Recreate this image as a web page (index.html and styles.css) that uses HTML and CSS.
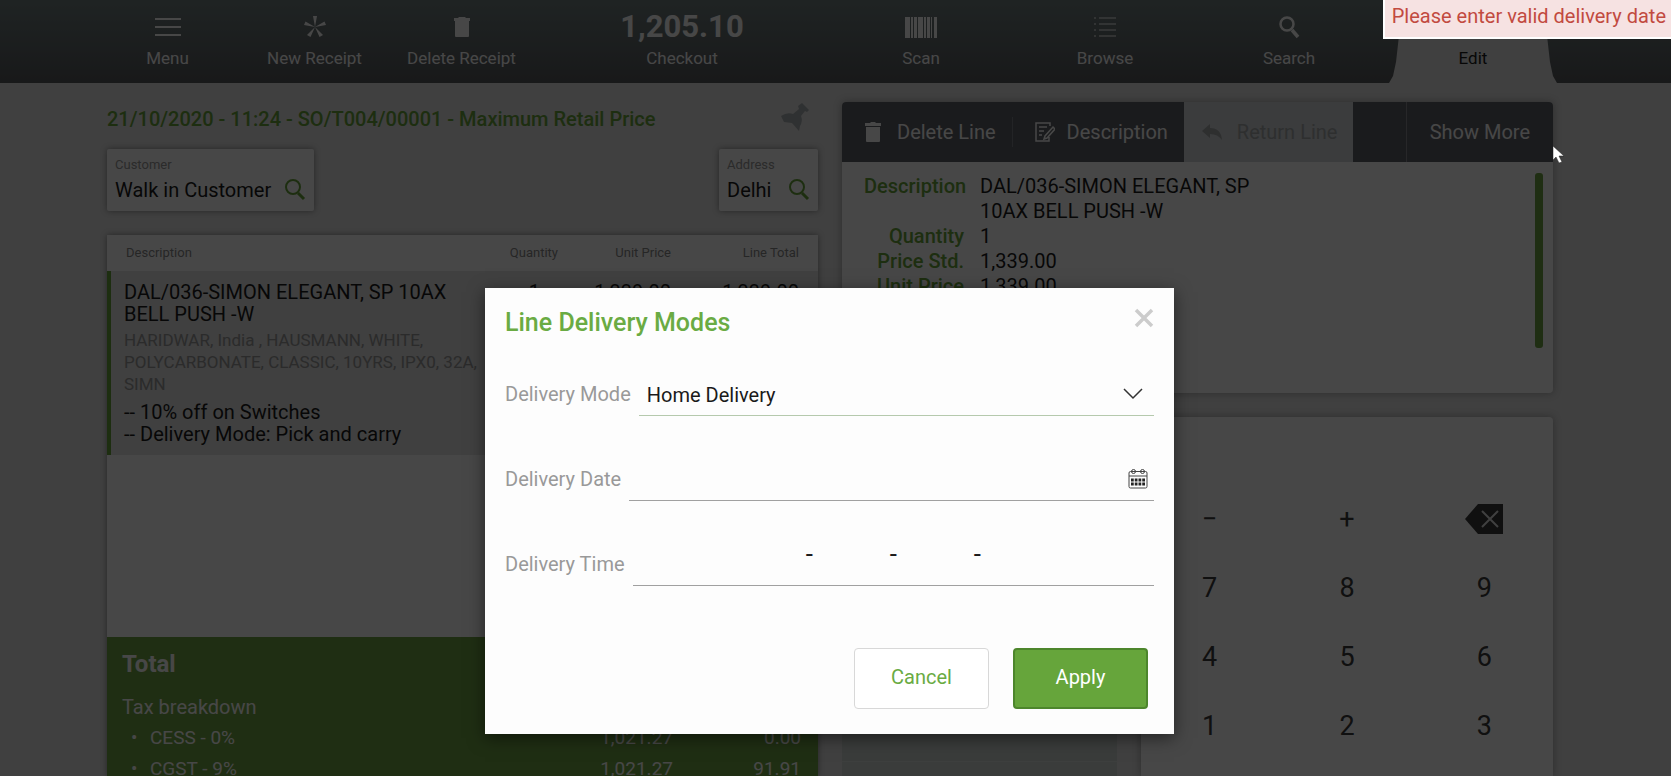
FILE: index.html
```
<!DOCTYPE html>
<html lang="en">
<head>
    <meta charset="UTF-8">
    <meta name="viewport" content="width=device-width, initial-scale=1.0">
    <title>Web POS</title>
    <link rel="stylesheet" href="styles.css">
</head>
<body>
    <div class="terminal">
        <nav class="toolbar">
            <button class="tool">
                <svg class="tool-icon" width="28" height="24" viewBox="0 0 28 24"><path d="M1 4h26M1 12h26M1 20h26" stroke="currentColor" stroke-width="2"/></svg>
                <span>Menu</span>
            </button>
            <button class="tool">
                <svg class="tool-icon" width="24" height="24" viewBox="0 0 24 24"><path d="M12 12L10 1h4zM12 12L1 10l1.500-3.500zM12 12l11-2-1.500-3.500zM12 12L4 20l3.500 2zM12 12l8 8-3.500 2z" fill="currentColor"/></svg>
                <span>New Receipt</span>
            </button>
            <button class="tool">
                <svg class="tool-icon" width="18" height="24" viewBox="0 0 18 24"><path d="M1 3h4l1-1h6l1 1h4v3H1zM2 6h14v15q0 1-1 1H3q-1 0-1-1z" fill="currentColor"/></svg>
                <span>Delete Receipt</span>
            </button>
            <button class="tool">
                <strong class="amount">1,205.10</strong>
                <span>Checkout</span>
            </button>
            <button class="tool">
                <svg class="tool-icon" width="32" height="24" viewBox="0 0 32 24"><path d="M0 2h5v21H0zM6 2h2v21H6zM9 2h3v21H9zM13 2h5v21h-5zM19 2h2v21h-2zM22 2h3v21h-3zM26 2h1v21h-1zM29 2h3v21h-3z" fill="currentColor"/></svg>
                <span>Scan</span>
            </button>
            <button class="tool">
                <svg class="tool-icon" width="24" height="24" viewBox="0 0 24 24"><path d="M1 3h2M1 9h2M1 15h2M1 21h2M6 3h17M6 9h17M6 15h17M6 21h17" stroke="currentColor" stroke-width="1"/></svg>
                <span>Browse</span>
            </button>
            <button class="tool">
                <svg class="tool-icon" width="24" height="24" viewBox="0 0 24 24"><g fill="none" stroke="currentColor"><circle cx="10" cy="9" r="6.500" stroke-width="2.500"/><path d="M15 15l6 7" stroke-width="3.500"/></g></svg>
                <span>Search</span>
            </button>
            <button class="tool tool-active">
                <svg class="tool-icon" width="24" height="24" viewBox="0 0 24 24"><path d="M4 20l1-5L17 3l4 4L9 19z" fill="currentColor"/></svg>
                <span>Edit</span>
            </button>
        </nav>

        <main class="workspace">
            <section class="receipt">
                <div class="receipt-head">
                    <h1>21/10/2020 - 11:24 - SO/T004/00001 - Maximum Retail Price</h1>
                    <svg class="pin" width="30" height="30" viewBox="0 0 30 30"><path d="M22 1l7 7-2 2-2-1-4 5q2 5-1 10l-1 5-7-8-8-1-3-6q6-4 12-2l6-5-1-3z"/></svg>
                </div>
                <div class="selectors">
                    <div class="selector">
                        <label for="customer">Customer</label>
                        <div class="selector-row">
                            <input id="customer" type="text" value="Walk in Customer">
                            <svg width="22" height="22" viewBox="0 0 22 22"><circle cx="9" cy="8" r="7"/><path d="M14 14l6 6" stroke-width="3"/></svg>
                        </div>
                    </div>
                    <div class="selector selector-small">
                        <label for="address">Address</label>
                        <div class="selector-row">
                            <input id="address" type="text" value="Delhi">
                            <svg width="22" height="22" viewBox="0 0 22 22"><circle cx="9" cy="8" r="7"/><path d="M14 14l6 6" stroke-width="3"/></svg>
                        </div>
                    </div>
                </div>
                <div class="ticket">
                    <table class="lines">
                        <thead>
                            <tr>
                                <th class="col-desc">Description</th>
                                <th class="col-qty">Quantity</th>
                                <th class="col-price">Unit Price</th>
                                <th class="col-total">Line Total</th>
                            </tr>
                        </thead>
                        <tbody>
                            <tr>
                                <td class="col-desc">
                                    <div>DAL/036-SIMON ELEGANT, SP 10AX BELL PUSH -W</div>
                                    <div class="attributes">HARIDWAR, India , HAUSMANN, WHITE, POLYCARBONATE, CLASSIC, 10YRS, IPX0, 32A, SIMN</div>
                                    <div>-- 10% off on Switches</div>
                                    <div>-- Delivery Mode: Pick and carry</div>
                                </td>
                                <td class="col-qty qty-value">1</td>
                                <td class="col-price">1,339.00</td>
                                <td class="col-total">1,339.00</td>
                            </tr>
                        </tbody>
                    </table>
                    <div class="totals">
                        <h2>Total</h2>
                        <p>Tax breakdown</p>
                        <ul>
                            <li><span>CESS - 0%</span><span>1,021.27</span><span>0.00</span></li>
                            <li><span>CGST - 9%</span><span>1,021.27</span><span>91.91</span></li>
                        </ul>
                    </div>
                </div>
            </section>

            <section class="side">
                <div class="card detail">
                    <div class="actions">
                        <button class="action">
                            <svg width="16" height="20" viewBox="0 0 16 20"><path d="M0 1h5l1-1h4l1 1h5v3H0zM1 5h14v14q0 1-1 1H2q-1 0-1-1z" fill="currentColor"/></svg>
                            Delete Line
                        </button>
                        <button class="action action-desc">
                            <svg width="20" height="20" viewBox="0 0 20 20"><path d="M15 4V1H1v18h13v-4M4 5h8M4 9h5M4 13h3M18 5l2 2-8 9-3 1 1-3z" fill="none" stroke="currentColor" stroke-width="1.500"/></svg>
                            Description
                        </button>
                        <button class="action action-off" disabled>
                            <svg width="21" height="18" viewBox="0 0 21 18"><path d="M8 1v4q11 0 12 12-4-6-12-6v4L0 8z" fill="currentColor"/></svg>
                            Return Line
                        </button>
                        <button class="action action-more">Show More</button>
                    </div>
                    <div class="detail-body">
                        <dl>
                            <dt>Description</dt><dd>DAL/036-SIMON ELEGANT, SP 10AX BELL PUSH -W</dd>
                            <dt>Quantity</dt><dd>1</dd>
                            <dt>Price Std.</dt><dd>1,339.00</dd>
                            <dt>Unit Price</dt><dd>1,339.00</dd>
                        </dl>
                        <div class="scrollbar"></div>
                    </div>
                </div>
                <div class="pad-row">
                    <div class="quick-keys"></div>
                    <div class="card keypad">
                        <div class="display"></div>
                        <button>−</button><button>+</button>
                        <button aria-label="Backspace"><svg width="38" height="30" viewBox="0 0 38 30"><path d="M0 15L13 0h25v30H13z" fill="#3a3a3a"/><path d="M17 7l16 16M33 7L17 23" stroke="#e4e4e4" stroke-width="2"/></svg></button>
                        <button>7</button><button>8</button><button>9</button>
                        <button>4</button><button>5</button><button>6</button>
                        <button>1</button><button>2</button><button>3</button>
                    </div>
                </div>
            </section>
        </main>
    </div>

    <div class="overlay">
        <form class="dialog" role="dialog" aria-labelledby="dialog-title">
            <header class="dialog-head">
                <h2 id="dialog-title">Line Delivery Modes</h2>
                <button class="close" type="button" aria-label="Close"><svg width="20" height="20" viewBox="0 0 20 20"><path d="M2 2l16 16M18 2L2 18" stroke="currentColor" stroke-width="3.500"/></svg></button>
            </header>
            <div class="field">
                <label for="mode">Delivery Mode</label>
                <div class="control control-mode">
                    <select id="mode"><option>Home Delivery</option></select>
                    <svg class="chevron" width="20" height="12" viewBox="0 0 20 12"><path d="M1 1l9 9 9-9" fill="none" stroke="#333" stroke-width="1.500"/></svg>
                </div>
            </div>
            <div class="field">
                <label for="date">Delivery Date</label>
                <div class="control">
                    <input id="date" type="text">
                    <svg class="calendar" width="20" height="20" viewBox="0 0 20 20"><g fill="none" stroke="#444"><rect x="1" y="2.500" width="18" height="16.500" rx="1.500"/><path d="M1 7h18"/><circle cx="5.500" cy="2.500" r="2"/><circle cx="14.500" cy="2.500" r="2"/></g><path d="M3 11h14M3 15h14" stroke="#222" stroke-width="3" stroke-dasharray="2.750 1"/></svg>
                </div>
            </div>
            <div class="field">
                <label for="time">Delivery Time</label>
                <div class="control time">
                    <input id="time" type="text"><span>-</span><input type="text" aria-label="From minutes"><span>-</span><input type="text" aria-label="To hours"><span>-</span><input type="text" aria-label="To minutes">
                </div>
            </div>
            <footer class="dialog-foot">
                <button class="btn" type="button">Cancel</button>
                <button class="btn btn-primary" type="button">Apply</button>
            </footer>
        </form>
    </div>

    <div class="alert" role="alert">Please enter valid delivery date</div>
    <svg class="pointer" width="12" height="18" viewBox="0 0 12 18"><path d="M0 0v14l3-3 3 6 3-1-3-6h5z" fill="#fff" stroke="#222" stroke-width=".5"/></svg>
</body>
</html>
```

FILE: styles.css
```
* {
    box-sizing: border-box;
}
body {
    margin: 0;
    height: 100vh;
    overflow: hidden;
    position: relative;
    font-family: Roboto, sans-serif;
    font-size: 20px;
    color: #1a1a1a;
    background-color: #e4e4e4;
}
button, input, select {
    font: inherit;
    color: inherit;
    border: none;
    background: none;
    padding: 0;
}
button {
    cursor: pointer;
}
h1, h2, p, ul, dl, dd {
    margin: 0;
    padding: 0;
}

/* Top toolbar */
.terminal {
    height: 100vh;
    display: flex;
    flex-direction: column;
}
.toolbar {
    flex: none;
    height: 83px;
    padding: 0 106px 0 94px;
    display: grid;
    grid-template-columns: 147fr 147fr 147fr 294fr 184fr 184fr 184fr 184fr;
    background: linear-gradient(#717f7f, #606769 65%, #57595c);
    color: #fff;
}
.tool {
    display: flex;
    flex-direction: column;
    align-items: center;
    padding-top: 15px;
    gap: 9px;
    font-size: 17px;
    line-height: 20px;
}
.tool-icon {
    height: 24px;
}
.amount {
    font-size: 31px;
    line-height: 24px;
}
.tool-active {
    margin: 0 8px;
    color: #1a1a1a;
    background-color: #e4e4e4;
    clip-path: polygon(14px 0, 154px 0, 161px 62px, 164px 76px, 100% 100%, 0 100%, 4px 76px, 7px 62px);
}

/* Receipt */
.workspace {
    flex: 1;
    min-height: 0;
    padding: 19px 118px 0 107px;
    display: grid;
    grid-template-columns: 1fr 1fr;
    gap: 24px;
}
.receipt, .side {
    display: flex;
    flex-direction: column;
    min-height: 0;
    min-width: 0;
}
.receipt-head {
    display: flex;
    justify-content: space-between;
    height: 47px;
    padding-right: 8px;
}
.receipt-head h1 {
    font-size: 20px;
    font-weight: 500;
    line-height: 34px;
    color: #6aa53c;
}
.pin {
    fill: #aab0b2;
}
.selectors {
    display: flex;
    justify-content: space-between;
    margin-bottom: 24px;
}
.selector {
    width: 207px;
    height: 62px;
    padding: 8px;
    background-color: #fff;
    border-radius: 2px;
    box-shadow: 0 0 6px rgba(0,0,0,0.4);
}
.selector-small {
    width: 99px;
}
.selector label {
    display: block;
    font-size: 13px;
    line-height: 15px;
    color: #999;
}
.selector-row {
    display: flex;
    justify-content: space-between;
    align-items: center;
    height: 36px;
}
.selector-row input {
    flex: 1;
    min-width: 0;
}
.selector-row svg {
    fill: none;
    stroke: #6aa53c;
    stroke-width: 2;
}
.ticket {
    flex: 1;
    min-height: 0;
    display: flex;
    flex-direction: column;
    justify-content: space-between;
    background-color: #fff;
    box-shadow: 0 0 6px rgba(0,0,0,0.4);
}
.lines {
    width: 100%;
    table-layout: fixed;
    border-collapse: collapse;
    line-height: 22px;
}
.lines th {
    height: 36px;
    padding: 0;
    font-size: 13px;
    font-weight: normal;
    color: #8a8a8a;
    text-align: right;
}
.lines td {
    height: 184px;
    padding: 10px 0 0;
    text-align: right;
    vertical-align: top;
    background-color: #e4e4e4;
}
.lines .col-desc {
    padding-left: 17px;
    text-align: left;
}
.lines td.col-desc {
    padding-left: 13px;
    border-left: 4px solid #6aa53c;
}
.col-qty {
    width: 74px;
}
.lines .qty-value {
    padding-right: 20px;
}
.col-price {
    width: 111px;
}
.col-total {
    width: 147px;
}
.lines .col-total {
    padding-right: 19px;
}
.attributes {
    margin: 4px 0 6px;
    font-size: 17px;
    color: #999;
}
.totals {
    flex: none;
    height: 139px;
    padding: 13px 17px 0 15px;
    overflow: hidden;
    color: #fff;
    background-color: #71a545;
}
.totals h2 {
    font-size: 24px;
    line-height: 28px;
}
.totals p {
    margin-top: 14px;
    line-height: 30px;
}
.totals li {
    display: grid;
    grid-template-columns: 28px 1fr 120px 128px;
    font-size: 19px;
    line-height: 31px;
}
.totals li::before {
    content: "•";
    padding-left: 9px;
}
.totals li span:nth-child(n+2) {
    text-align: right;
}

/* Line detail */
.card {
    background-color: #fff;
    border-radius: 4px;
    box-shadow: 0 0 8px rgba(0,0,0,0.3);
}
.detail {
    height: 291px;
    overflow: hidden;
    flex: none;
}
.actions {
    display: flex;
    height: 60px;
    color: #fff;
    background-color: #5f6268;
}
.action {
    display: flex;
    align-items: center;
    gap: 16px;
    padding: 0 16px 0 23px;
}
.action-desc {
    gap: 12px;
    position: relative;
}
.action-desc::before {
    content: "";
    position: absolute;
    left: 0;
    top: 15px;
    height: 30px;
    border-left: 1px solid #7f8288;
}
.action-off {
    gap: 14px;
    padding: 0 16px 0 18px;
    color: #a4a8aa;
    background-color: #d3d7d9;
}
.action-more {
    margin-left: auto;
    padding: 0 23px;
    border-left: 1px solid #8b8e93;
}
.detail-body {
    display: flex;
    justify-content: space-between;
    padding: 11px 10px 0 22px;
}
.detail-body dl {
    display: grid;
    grid-template-columns: 100px 280px;
    column-gap: 16px;
    align-content: start;
    padding-top: 1px;
    line-height: 25px;
}
.detail-body dt {
    text-align: right;
    font-weight: 500;
    color: #6aa53c;
}
.scrollbar {
    width: 8px;
    height: 175px;
    border-radius: 3px;
    background-color: #71a545;
}

/* Keypad */
.pad-row {
    flex: 1;
    min-height: 0;
    display: flex;
    gap: 24px;
    margin-top: 24px;
}
.quick-keys {
    flex: 275;
    background: repeating-linear-gradient(#cfd6d4 0 68px, #dfe4e2 68px 69px);
}
.keypad {
    flex: 412;
    display: grid;
    grid-template-columns: repeat(3, 1fr);
    grid-template-rows: 67px;
    grid-auto-rows: 69px;
    border-bottom-left-radius: 0;
    border-bottom-right-radius: 0;
}
.display {
    grid-column: span 3;
}
.keypad button {
    display: flex;
    align-items: center;
    justify-content: center;
    font-size: 27px;
    color: #3a3a3a;
}

/* Dialog */
.overlay {
    position: absolute;
    inset: 0;
    padding: 288px 119px 0 107px;
    display: flex;
    justify-content: center;
    align-items: flex-start;
    background-color: rgba(0,0,0,0.72);
}
.dialog {
    width: 689px;
    padding: 18px 20px 25px;
    background-color: #fdfdfd;
    box-shadow: 0 4px 16px rgba(0,0,0,0.5);
}
.dialog-head {
    display: flex;
    justify-content: space-between;
    height: 53px;
}
.dialog-head h2 {
    font-size: 25px;
    font-weight: 500;
    line-height: 34px;
    color: #6aab43;
}
.close {
    height: 28px;
    color: #ccc;
}
.field {
    display: flex;
    height: 57px;
    gap: 8px;
    margin-bottom: 28px;
}
.field label {
    line-height: 71px;
    color: #999;
}
.control {
    flex: 1;
    display: flex;
    align-items: center;
    position: relative;
    border-bottom: 1px solid #a0a0a0;
}
.control-mode {
    border-color: #b5c9ad;
}
.control input, .control select {
    flex: 1;
    min-width: 0;
    height: 40px;
    outline: none;
}
.control select {
    appearance: none;
    height: 100%;
    padding: 16px 8px 0;
}
.chevron {
    position: absolute;
    right: 11px;
    bottom: 15px;
    pointer-events: none;
}
.calendar {
    position: absolute;
    right: 6px;
    bottom: 11px;
}
.control.time {
    justify-content: center;
    padding-bottom: 7px;
}
.control.time input {
    flex: none;
    width: 75px;
}
.control.time span {
    width: 9px;
    font-size: 26px;
    text-align: center;
}
.dialog-foot {
    display: flex;
    justify-content: flex-end;
    gap: 24px;
    padding: 34px 6px 0 0;
}
.btn {
    width: 135px;
    height: 61px;
    padding-bottom: 3px;
    color: #6aab43;
    background-color: #fff;
    border: 1px solid #d8d8d8;
    border-radius: 4px;
}
.btn-primary {
    color: #fff;
    background-color: #66a53b;
    border: 2px solid #4d862c;
}

.alert {
    position: absolute;
    top: 0;
    right: 0;
    padding: 0 5px 4px 7px;
    line-height: 33px;
    color: #c24a40;
    background-color: #f6e2e2;
    border: 2px solid #fff;
    border-top: none;
    border-right: none;
}
.pointer {
    position: absolute;
    top: 146px;
    left: 1553px;
}
```
